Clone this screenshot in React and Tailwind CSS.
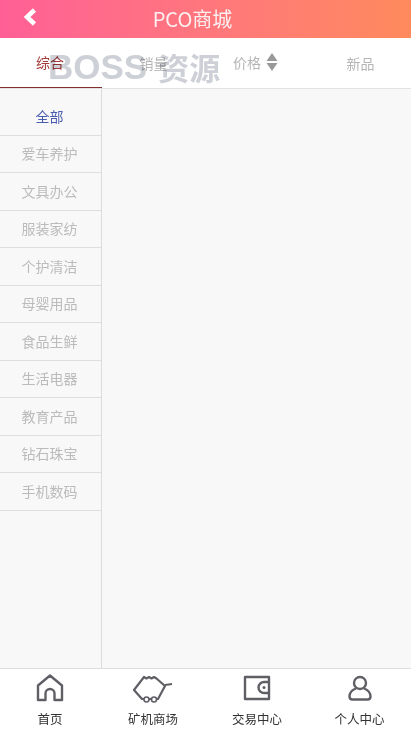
const font = { fontFamily: '"Noto Sans CJK SC", sans-serif' }

const categories = ['全部', '爱车养护', '文具办公', '服装家纺', '个护清洁', '母婴用品', '食品生鲜', '生活电器', '教育产品', '钻石珠宝', '手机数码']

function HomeIcon() {
  return (
    <svg width="28" height="28" viewBox="0 0 28 28" fill="none" stroke="#5f5f66" strokeWidth="2.4">
      <path d="M2 26V11.5L14 1.5l12 10V26h-7.500v-6.500a4.500 4.500 0 0 0-9 0V26z" strokeLinejoin="round" />
    </svg>
  )
}

function MinerIcon() {
  return (
    <svg width="40" height="30" viewBox="0 0 40 30" fill="none" stroke="#5f5f66" strokeWidth="2.2">
      <path d="M1 17L11 4l2.500 1.500L16 4l2.500 1.500L21 4l2.500 1.500L32 13l-7 13H9z" strokeLinejoin="round" />
      <path d="M32 12l7-1" />
      <circle cx="13.500" cy="26.500" r="2.500" strokeWidth="1.600" fill="white" />
      <circle cx="21" cy="26.500" r="2.500" strokeWidth="1.600" fill="white" />
    </svg>
  )
}

function WalletIcon() {
  return (
    <svg width="28" height="26" viewBox="0 0 28 26" fill="none" stroke="#5f5f66" strokeWidth="2.4">
      <path d="M2 2h24v22H2z" strokeLinejoin="round" />
      <path d="M26 7h-5a5.500 5.500 0 0 0 0 11h5" />
      <circle cx="21" cy="12.500" r="1.500" fill="#5f5f66" stroke="none" />
    </svg>
  )
}

function UserIcon() {
  return (
    <svg width="24" height="26" viewBox="0 0 24 26" fill="none" stroke="#5f5f66" strokeWidth="2.4">
      <circle cx="12" cy="8" r="6" />
      <path d="M8 13.500C4 15 1.500 18 1.500 21.500c0 2 1 3 3 3h15c2 0 3-1 3-3 0-3.500-2.500-6.500-6.500-8" strokeLinejoin="round" />
    </svg>
  )
}

function NavItem({ icon, label, className }) {
  return (
    <div className={`flex flex-col items-center ${className}`}>
      <div className="flex h-[38px] items-center justify-center">{icon}</div>
      <span className="mt-[3px] text-[12.500px] leading-[18px] text-[#333]">{label}</span>
    </div>
  )
}

export default function App() {
  return (
    <div className="relative flex h-[733px] w-[411px] flex-col overflow-hidden bg-white" style={font}>
      <header className="relative flex h-[38px] shrink-0 items-center justify-center bg-gradient-to-r from-[#ff5f96] to-[#ff8a5c] pr-[26px]">
        <svg className="absolute left-[23px] top-[8px]" width="14" height="18" viewBox="0 0 14 18" fill="none" stroke="white" strokeWidth="4.500">
          <path d="M11.500 2L4 9l7.500 7" />
        </svg>
        <h1 className="text-[20px] leading-none text-[#fdeef0]">PCO商城</h1>
      </header>

      <div className="flex h-[51px] shrink-0 border-b border-[#e2e2e2] text-[14px] text-[#b5b5b5]">
        <div className="flex w-[102px] items-center justify-center border-b border-[#7f2f2f] pr-[2px] text-[#a33a3a]">综合</div>
        <div className="flex w-[103px] items-center justify-center">销量</div>
        <div className="flex w-[103px] items-center justify-center gap-[5px] pb-[2px] pr-[2px]">
          价格
          <svg width="12" height="18" viewBox="0 0 12 18" fill="#999">
            <path d="M6 0l5.500 8H.5zM6 18L.5 10h11z" />
          </svg>
        </div>
        <div className="flex w-[103px] items-center justify-center pl-[2px]">新品</div>
      </div>

      <div className="flex min-h-0 flex-1 bg-[#f8f8f8]">
        <aside className="w-[102px] shrink-0 border-r border-[#dcdcdc] pt-[9px]">
          {categories.map((name, i) => (
            <div
              key={name}
              className={`flex h-[37.5px] items-center justify-center border-b border-[#dedede] pr-[2px] text-[14px] ${i === 0 ? 'text-[#4a5cae]' : 'text-[#bbb]'}`}
            >
              {name}
            </div>
          ))}
        </aside>
        <main className="flex-1" />
      </div>

      <nav className="flex h-[65px] shrink-0 border-t border-[#dedede] bg-white">
        <NavItem className="w-[100px]" icon={<HomeIcon />} label="首页" />
        <NavItem className="w-[106px]" icon={<MinerIcon />} label="矿机商场" />
        <NavItem className="w-[102px]" icon={<WalletIcon />} label="交易中心" />
        <NavItem className="w-[103px]" icon={<UserIcon />} label="个人中心" />
      </nav>

      <div className="pointer-events-none absolute left-[48px] top-[46px] flex items-center gap-[11px] font-bold leading-[42px] text-[#cdd0d6] mix-blend-multiply">
        <span className="text-[35px]" style={{ fontFamily: '"Liberation Sans", sans-serif' }}>BOSS</span>
        <span className="text-[31px]">资源</span>
      </div>
    </div>
  )
}
